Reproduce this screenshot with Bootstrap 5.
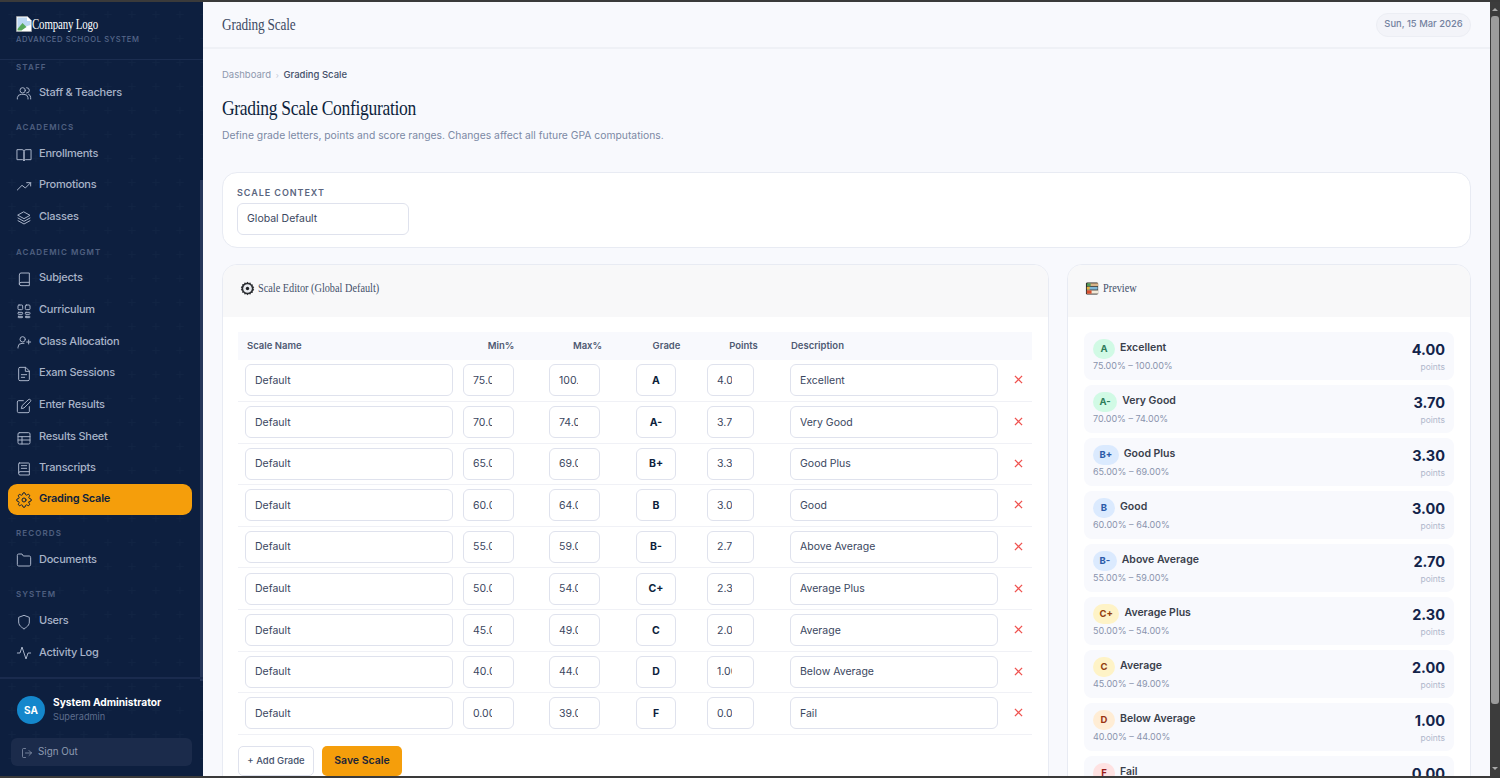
<!DOCTYPE html>
<html lang="en">
<head>
<meta charset="utf-8">
<title>Grading Scale</title>
<link rel="stylesheet" href="https://cdn.jsdelivr.net/npm/bootstrap@5.3.0/dist/css/bootstrap.min.css">
<style>
html,body{height:100%;overflow:hidden}
body{background:#444;font-family:"Inter","Noto Sans",sans-serif;color:#1f2a44;font-size:11.5px}
.shell{height:778px;padding:2px 0 2px 0;background:#3a3a3a}
.side{width:203px;flex:none;background-color:#0d1f3f;position:relative;
 background-image:url("data:image/svg+xml,%3Csvg xmlns='http://www.w3.org/2000/svg' width='24' height='24'%3E%3Cpath d='M12 9v7M8.500 12.500h7' stroke='%23112443' stroke-width='1'/%3E%3C/svg%3E")}
.brand{height:58px;border-bottom:1px solid #1b2d50;padding:13px 16px 0;flex:none;position:relative}
.brand-logo{font-family:"Liberation Serif",serif;font-size:15.5px;color:#fff;line-height:17px;white-space:nowrap;display:flex;align-items:center}
.brand-logo svg{width:16px;height:16px;flex:none}
.brand-logo span{display:inline-block;transform:scaleX(.7);transform-origin:left center;letter-spacing:-.2px}
.brand-sub{font-size:7.6px;letter-spacing:.62px;color:#56678a;font-weight:500;line-height:11px;margin-top:2px;white-space:nowrap}
.side-nav{flex:1 1 0;overflow:hidden;padding:0 11px 0 8px;position:relative;min-height:0}
.nav-head{font-size:8px;font-weight:600;letter-spacing:1.1px;color:#4f5f80;padding:0 8px;line-height:11px;white-space:nowrap}
.nav-head + .nav-row{margin-top:4px}
.nh{margin-top:13.5px}
.nh + .nav-row{margin-top:5px}
.nav-row{height:31.7px;display:flex;align-items:center;gap:7px;padding:0 8px 2px;color:#a8b3c8;font-size:11px;letter-spacing:-.25px;font-weight:500;border-radius:9px;white-space:nowrap}
.nav-row svg{width:16px;height:16px;flex:none;fill:none;stroke:currentColor;stroke-width:1.5;stroke-linecap:round;stroke-linejoin:round;margin-top:3px}
.nav-row.on{background:#f59e0b;color:#0d1f3c;font-weight:600;height:31px;padding-bottom:1px;margin-top:-1px;margin-bottom:2.2px}
.thumb{position:absolute;right:0;top:178px;height:501px;width:3px;background:#26375a}
.side-foot{flex:none;height:99px;border-top:2px solid #1a2b4e;padding:17px 8px 0 11px;position:relative}
.ava{width:28px;height:28px;border-radius:50%;background:#1487cc;color:#fff;font-size:10px;font-weight:700;flex:none;margin-left:6px}
.u-name{font-size:10.2px;font-weight:700;color:#fff;line-height:13px;white-space:nowrap}
.u-role{font-size:9.2px;color:#5d6d8d;line-height:11px;margin-top:2px;margin-bottom:2px}
.signout{margin-top:14px;height:28px;border-radius:6px;background:#1b2b4b;color:#8f9bb2;font-size:9.8px;padding:0 10px;gap:5px;width:181px}
.signout svg{width:12px;height:12px;fill:none;stroke:currentColor;stroke-width:1.5;stroke-linecap:round;stroke-linejoin:round;margin-top:2px}
.main-area{flex:1 1 0;min-width:0;background:#f8f9fd;overflow:hidden}
.topbar{height:47px;border-bottom:2px solid #eff1f6;padding:0 19px;flex:none}
.top-title{font-family:"Liberation Serif",serif;font-size:16px;color:#3d4a63;letter-spacing:-.2px;transform:scaleX(.83);transform-origin:left center;white-space:nowrap}
.date-pill{height:24px;padding:0 8px;border:1px solid #eceef4;border-radius:12px;background:#f3f4f9;color:#7482a0;font-size:9.4px;font-weight:500;width:95px;white-space:nowrap}
.content-wrap{padding:20px 19px 0}
.crumbs{font-size:9.5px;color:#8d98ae;line-height:12px}
.crumbs b{font-weight:500;color:#44506a}
.crumbs i{font-style:normal;color:#c4cad6;margin:0 2px;font-size:8px}
.pg-title{font-family:"Liberation Serif",serif;font-weight:400;font-size:22px;color:#0d1f3c;letter-spacing:-.4px;line-height:26px;margin:14px 0 0;transform:scaleX(.797);transform-origin:left center;white-space:nowrap}
.pg-sub{font-size:10.33px;color:#7c89a5;line-height:14px;margin:7px 0 0;white-space:nowrap}
.panel{background:#fff;border:1px solid #e8ebf3;border-radius:15px;overflow:hidden}
.ctx{margin-top:30px;height:76px;padding:14px 14px 0}
.ctx-label{display:block;font-size:9px;font-weight:600;letter-spacing:.95px;color:#5a6580;line-height:11px;margin-bottom:5px}
.ctl{border:1px solid #dfe2ed;border-radius:6px;background:#fff;height:32px;color:#3a4660;font-size:10.5px;padding:0 9px;width:100%;display:block;box-shadow:none}
.ctx .ctl{width:172px}
.pan-row{margin-top:16px;gap:18px}
.pan-edit{width:827px;flex:none}
.pan-prev{flex:1 1 0}
.pan-head{height:52px;background:#f8f8f9;padding:0 17px 6px;font-family:"Liberation Serif",serif;font-size:13px;color:#44506a;gap:3px;white-space:nowrap}
.pan-head span{display:inline-block;transform:scaleX(.79);transform-origin:left center}
.pan-head svg{width:15px;height:15px;flex:none}
.pan-body{padding:15px 16px 0 15px}
.gt{table-layout:fixed;width:794px;border-collapse:collapse;margin:0}
.gt th{background:#f8f9fd;height:28px;font-size:9.5px;font-weight:600;color:#4f5a73;text-align:center;padding:0 5px;border:0}
.gt th:first-child{text-align:left;padding-left:9px}
.gt th:nth-child(6){text-align:left;padding-left:6px}
.gt td{padding:3.5px 5px 4px;border-bottom:1px solid #f0f1f6;height:41.6px;vertical-align:middle}
.gt td:first-child{padding-left:7px}
.gt .ctl{height:32px}
.gt .mid{width:51px;padding:0 21px 0 9px}
.gt .gr{width:40px;text-align:center;font-weight:700;color:#0d1f3c;padding:0 2px}
.gt .pts{width:47px;padding:0 21px 0 9px}
.xbtn{display:block}
.xbtn svg{width:9px;height:9px;stroke:#ef5350;stroke-width:1.4;fill:none;display:block;margin:0 0 1px 6px}
.act{margin-top:11px;gap:8px}
.b-add{height:30px;width:76px;padding:0;border:1px solid #dfe2ed;border-radius:5px;background:#fff;color:#44506a;font-size:9.5px;font-weight:500}
.b-save{height:30px;width:80px;padding:0;border:0;border-radius:5px;background:#f59e0b;color:#1a2438;font-size:10.5px;font-weight:600}
.pv-list{gap:5px;padding:15px 16px 0}
.pv{background:#f8f9fd;border-radius:8px;height:48px;padding:7px 9px 0 9px;flex:none}
.pv-top{gap:5px;height:20px}
.gbadge{height:20px;min-width:22px;padding:0 6.5px;border-radius:10px;font-size:9.5px;font-weight:700;line-height:20px;text-align:center}
.g-a{background:#d1fae5;color:#2f7d5b}.g-b{background:#dbeafe;color:#2b5aa8}.g-c{background:#fef3c7;color:#92400e}.g-d{background:#ffedd5;color:#9a3412}.g-f{background:#fee2e2;color:#991b1b}
.pv-name{font-size:10.5px;font-weight:600;color:#3a3f4c;white-space:nowrap;margin-top:-2px}
.pv-range{font-size:9px;color:#8a94ad;line-height:12px;margin-top:1px;white-space:nowrap}
.pv-num{font-size:14.5px;font-weight:700;color:#13244a;line-height:18px;margin-top:2px}
.pv-lab{font-size:8.5px;color:#b0b8cc;line-height:11px;margin-top:3px}
.sb{width:10px;flex:none;background:#3c3c3c;position:relative}
.sb-up,.sb-dn{position:absolute;left:2px;width:0;height:0;border-left:3px solid transparent;border-right:3px solid transparent}
.sb-up{top:6px;border-bottom:3px solid #aaa}
.sb-dn{bottom:6px;border-top:3px solid #aaa}
.sb-th{position:absolute;left:1px;right:1px;top:14px;height:688px;background:#9c9c9c;border-radius:3px}
</style>
</head>
<body>
<div class="shell d-flex">
  <aside class="side d-flex flex-column">
    <div class="brand">
      <div class="brand-logo"><svg viewBox="0 0 16 16"><path d="M.5.5h11l4 4v11H.5z" fill="#fff" stroke="#aaa" stroke-width=".6"/><path d="M1.500 1.500h9.500v3.500h3.500v4L1.500 13z" fill="#bcd8f2"/><path d="M1.500 13l5-6 4 4-5 3.500H1.500z" fill="#57a85a"/></svg><span>Company Logo</span></div>
      <div class="brand-sub">ADVANCED SCHOOL SYSTEM</div>
    </div>
    <nav class="side-nav">
      <div class="nav-head" style="margin-top:2px">STAFF</div>
      <div class="nav-row"><svg viewBox="0 0 24 24"><circle cx="10" cy="8" r="4"/><path d="M2 21v-2a6 6 0 0 1 6-5h4a6 6 0 0 1 6 5v2M16 4a4 4 0 0 1 0 8M19 14a5 5 0 0 1 3 5v2"/></svg>Staff &amp; Teachers</div>
      <div class="nav-head nh">ACADEMICS</div>
      <div class="nav-row"><svg viewBox="0 0 24 24"><path d="M2 4h7a3 3 0 0 1 3 3v14a2 2 0 0 0-2-2H2zM22 4h-7a3 3 0 0 0-3 3v14a2 2 0 0 1 2-2h8z"/></svg>Enrollments</div>
      <div class="nav-row"><svg viewBox="0 0 24 24"><path d="M2 18l7-7 5 4 8-8M16 7h6v5"/></svg>Promotions</div>
      <div class="nav-row"><svg viewBox="0 0 24 24"><path d="M12 3l9 5-9 5-9-5zM3 12l9 5 9-5M3 16l9 5 9-5"/></svg>Classes</div>
      <div class="nav-head nh">ACADEMIC MGMT</div>
      <div class="nav-row"><svg viewBox="0 0 24 24"><path d="M5 19.500A2.500 2.500 0 0 1 7.500 17H20V3H7.500A2.500 2.500 0 0 0 5 5.500zM5 19.500A2.500 2.500 0 0 0 7.500 22H20v-5"/></svg>Subjects</div>
      <div class="nav-row"><svg viewBox="0 0 24 24"><rect x="3" y="3" width="7" height="7" rx="1.500"/><rect x="14" y="3" width="7" height="7" rx="1.500"/><rect x="3" y="14" width="7" height="3" rx="1"/><rect x="14" y="14" width="7" height="3" rx="1"/><rect x="3" y="20" width="7" height="2" rx="1"/><rect x="14" y="20" width="7" height="2" rx="1"/></svg>Curriculum</div>
      <div class="nav-row"><svg viewBox="0 0 24 24"><circle cx="10" cy="8" r="4"/><path d="M3 21v-1a6 6 0 0 1 6-6h3M19 9v6M16 12h6"/></svg>Class Allocation</div>
      <div class="nav-row"><svg viewBox="0 0 24 24"><path d="M14 2H6a2 2 0 0 0-2 2v16a2 2 0 0 0 2 2h12a2 2 0 0 0 2-2V8zM14 2v6h6M8 13h8M8 17h5"/></svg>Exam Sessions</div>
      <div class="nav-row"><svg viewBox="0 0 24 24"><path d="M11 4H4a2 2 0 0 0-2 2v14a2 2 0 0 0 2 2h14a2 2 0 0 0 2-2v-7"/><path d="M18.500 2.500a2.100 2.100 0 0 1 3 3L12 15l-4 1 1-4z"/></svg>Enter Results</div>
      <div class="nav-row"><svg viewBox="0 0 24 24"><rect x="3" y="4" width="18" height="17" rx="2"/><path d="M3 10h18M3 15h18M9 10v11"/></svg>Results Sheet</div>
      <div class="nav-row"><svg viewBox="0 0 24 24"><path d="M5 3h14a1 1 0 0 1 1 1v17H6a2 2 0 0 1-2-2V4a1 1 0 0 1 1-1zM4 18a2 2 0 0 1 2-2h14M8 7h8M8 11h8"/></svg>Transcripts</div>
      <div class="nav-row on"><svg viewBox="0 0 24 24"><circle cx="12" cy="12" r="3"/><path d="M19.400 15a1.700 1.700 0 0 0 .3 1.800l.1.1a2 2 0 1 1-2.900 2.900l-.1-.1a1.700 1.700 0 0 0-2.800 1.200V21a2 2 0 1 1-4 0v-.1a1.700 1.700 0 0 0-2.900-1.100l-.1.1a2 2 0 1 1-2.800-2.900l.1-.1a1.700 1.700 0 0 0-1.200-2.800H3a2 2 0 1 1 0-4h.1a1.700 1.700 0 0 0 1.100-2.900l-.1-.1a2 2 0 1 1 2.900-2.800l.1.1a1.700 1.700 0 0 0 1.800.3H9a1.700 1.700 0 0 0 1-1.500V3a2 2 0 1 1 4 0v.1a1.700 1.700 0 0 0 2.900 1.100l.1-.1a2 2 0 1 1 2.800 2.900l-.1.1a1.700 1.700 0 0 0-.3 1.800V9a1.700 1.700 0 0 0 1.500 1H21a2 2 0 1 1 0 4h-.1a1.700 1.700 0 0 0-1.500 1z"/></svg>Grading Scale</div>
      <div class="nav-head nh">RECORDS</div>
      <div class="nav-row"><svg viewBox="0 0 24 24"><path d="M22 19a2 2 0 0 1-2 2H4a2 2 0 0 1-2-2V5a2 2 0 0 1 2-2h5l2 3h9a2 2 0 0 1 2 2z"/></svg>Documents</div>
      <div class="nav-head nh">SYSTEM</div>
      <div class="nav-row"><svg viewBox="0 0 24 24"><path d="M12 22s8-3 8-10V5l-8-3-8 3v7c0 7 8 10 8 10z"/></svg>Users</div>
      <div class="nav-row"><svg viewBox="0 0 24 24"><path d="M22 12h-4l-3 9L9 3l-3 9H2"/></svg>Activity Log</div>
    </nav>
    <div class="thumb"></div>
    <div class="side-foot">
      <div class="d-flex align-items-center gap-2">
        <div class="ava d-flex align-items-center justify-content-center">SA</div>
        <div><div class="u-name">System Administrator</div><div class="u-role">Superadmin</div></div>
      </div>
      <div class="signout d-flex align-items-center"><svg viewBox="0 0 24 24"><path d="M9 21H5a2 2 0 0 1-2-2V5a2 2 0 0 1 2-2h4M16 17l5-5-5-5M21 12H9"/></svg>Sign Out</div>
    </div>
  </aside>
  <div class="main-area d-flex flex-column">
    <header class="topbar d-flex align-items-center justify-content-between">
      <div class="top-title">Grading Scale</div>
      <div class="date-pill d-flex align-items-center justify-content-center">Sun, 15 Mar 2026</div>
    </header>
    <div class="content-wrap">
      <div class="crumbs">Dashboard <i>›</i> <b>Grading Scale</b></div>
      <h1 class="pg-title">Grading Scale Configuration</h1>
      <p class="pg-sub">Define grade letters, points and score ranges. Changes affect all future GPA computations.</p>
      <div class="panel ctx">
        <label class="ctx-label">SCALE CONTEXT</label>
        <div class="ctl d-flex align-items-center">Global Default</div>
      </div>
      <div class="d-flex pan-row">
        <section class="panel pan-edit">
          <div class="pan-head d-flex align-items-center">
            <svg viewBox="0 0 16 16"><path d="M8 .8l1.300 1.400 1.800-.6.7 1.800 1.900.2-.1 1.900 1.600 1-1 1.600 1 1.500-1.600 1.100.1 1.900-1.900.1-.7 1.800-1.800-.6L8 15.200l-1.300-1.400-1.800.6-.7-1.800-1.900-.2.1-1.900-1.600-1 1-1.600-1-1.500 1.600-1.100-.1-1.900 1.900-.1.7-1.800 1.800.6z" fill="#2a2c30"/><circle cx="8" cy="8" r="4.600" fill="#e9ebef"/><circle cx="8" cy="8" r="1.800" fill="#1d1f23"/></svg>
            <span>Scale Editor (Global Default)</span>
          </div>
          <div class="pan-body">
            <table class="gt">
              <colgroup><col style="width:220px"><col style="width:86px"><col style="width:87px"><col style="width:71px"><col style="width:83px"><col style="width:218px"><col style="width:29px"></colgroup>
              <thead><tr><th>Scale Name</th><th>Min%</th><th>Max%</th><th>Grade</th><th>Points</th><th>Description</th><th></th></tr></thead>
              <tbody id="rows"></tbody>
            </table>
            <div class="d-flex act">
              <button class="btn b-add" type="button">+ Add Grade</button>
              <button class="btn b-save" type="button">Save Scale</button>
            </div>
          </div>
        </section>
        <section class="panel pan-prev">
          <div class="pan-head d-flex align-items-center">
            <svg viewBox="0 0 16 16"><rect x="1" y="1.500" width="13" height="13" rx="1.500" fill="#2b2420"/><rect x="3" y="2.500" width="11" height="3" fill="#d9b48a"/><rect x="2" y="2.500" width="4" height="3" fill="#4c9a5a"/><rect x="2" y="6.200" width="11.500" height="3" fill="#7fb8d8"/><rect x="2" y="6.200" width="3" height="3" fill="#e8b23c"/><rect x="2" y="10" width="12" height="3.500" fill="#f2ead9"/><rect x="2" y="10" width="5" height="3.500" fill="#d9502f"/></svg>
            <span>Preview</span>
          </div>
          <div class="d-flex flex-column pv-list" id="prev"></div>
        </section>
      </div>
    </div>
  </div>
  <div class="sb"><div class="sb-up"></div><div class="sb-th"></div><div class="sb-dn"></div></div>
</div>
<script src="https://cdn.jsdelivr.net/npm/bootstrap@5.3.0/dist/js/bootstrap.bundle.min.js"></script>
<script>
var d=[["A","Excellent","75.00","100.00","4.00","a"],["A-","Very Good","70.00","74.00","3.70","a"],["B+","Good Plus","65.00","69.00","3.30","b"],["B","Good","60.00","64.00","3.00","b"],["B-","Above Average","55.00","59.00","2.70","b"],["C+","Average Plus","50.00","54.00","2.30","c"],["C","Average","45.00","49.00","2.00","c"],["D","Below Average","40.00","44.00","1.00","d"],["F","Fail","0.00","39.00","0.00","f"]];
var r="",p="";
d.forEach(function(x){
 r+='<tr><td><input class="ctl" value="Default"></td><td><input class="ctl mid" value="'+x[2]+'"></td><td><input class="ctl mid" value="'+x[3]+'"></td><td><input class="ctl gr" value="'+x[0]+'"></td><td><input class="ctl pts" value="'+x[4]+'"></td><td><input class="ctl" value="'+x[1]+'"></td><td><span class="xbtn"><svg viewBox="0 0 10 10"><path d="M1 1l8 8M9 1l-8 8"/></svg></span></td></tr>';
 p+='<div class="pv d-flex justify-content-between"><div><div class="d-flex align-items-center pv-top"><span class="gbadge g-'+x[5]+'">'+x[0]+'</span><span class="pv-name">'+x[1]+'</span></div><div class="pv-range">'+x[2]+'% – '+x[3]+'%</div></div><div class="text-end"><div class="pv-num">'+x[4]+'</div><div class="pv-lab">points</div></div></div>';
});
document.getElementById("rows").innerHTML=r;document.getElementById("prev").innerHTML=p;
</script>
</body>
</html>
